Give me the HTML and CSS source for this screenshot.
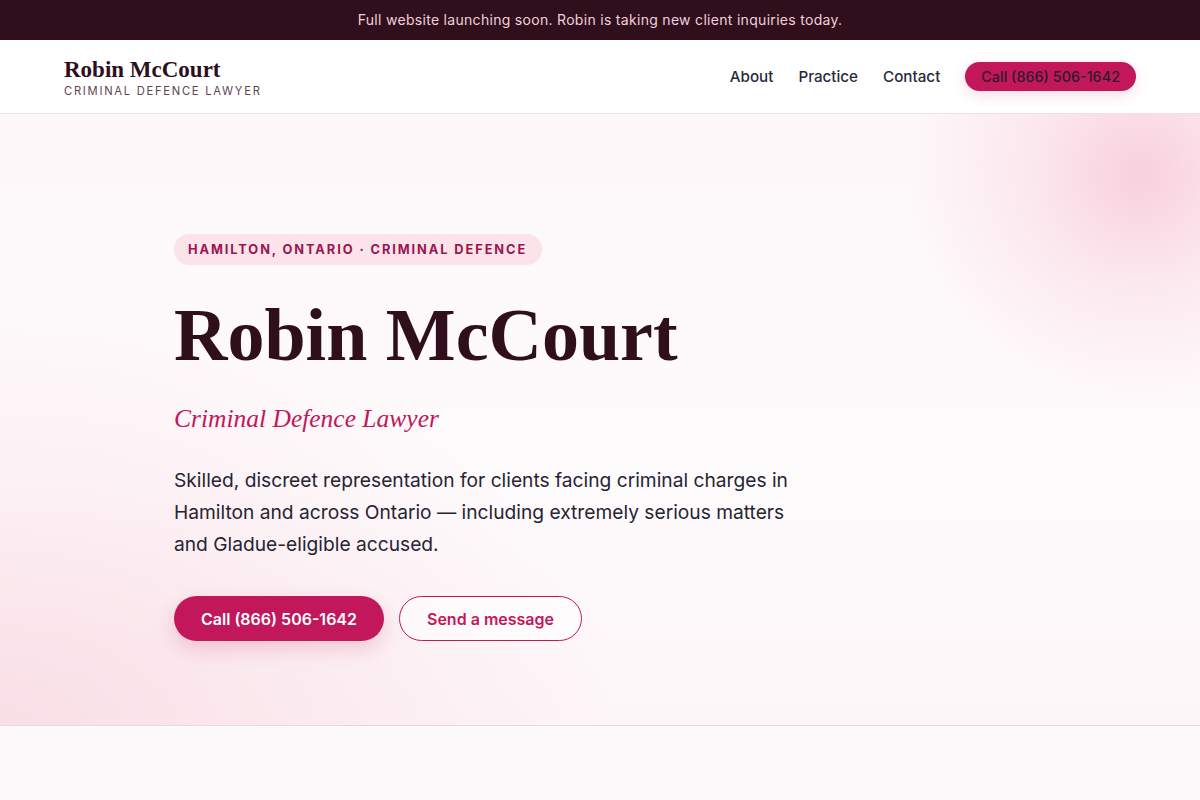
FILE: index.html
```html
<!DOCTYPE html>
<html lang="en">
<head>
    <meta charset="UTF-8">
    <meta name="viewport" content="width=device-width, initial-scale=1.0">
    <title>Robin McCourt - Criminal Defence Lawyer</title>
    <link rel="stylesheet" href="styles.css">
</head>
<body>
    <div class="announce">Full website launching soon. Robin is taking new client inquiries today.</div>

    <header class="site-header">
        <a class="brand" href="#">
            <span class="brand-name">Robin McCourt</span>
            <span class="brand-tag">Criminal Defence Lawyer</span>
        </a>
        <nav class="nav">
            <a href="#about">About</a>
            <a href="#practice">Practice</a>
            <a href="#contact">Contact</a>
            <a class="nav-call" href="tel:18665061642">Call (866) 506-1642</a>
        </nav>
    </header>

    <section class="hero">
        <div class="hero-inner">
            <span class="eyebrow">Hamilton, Ontario · Criminal Defence</span>
            <h1>Robin McCourt</h1>
            <p class="hero-sub">Criminal Defence Lawyer</p>
            <p class="hero-lead">Skilled, discreet representation for clients facing criminal charges in Hamilton and across Ontario — including extremely serious matters and Gladue-eligible accused.</p>
            <div class="hero-actions">
                <a class="btn btn-primary" href="tel:18665061642">Call (866) 506-1642</a>
                <a class="btn btn-outline" href="#contact">Send a message</a>
            </div>
        </div>
    </section>

    <section class="below"></section>
</body>
</html>
```

FILE: styles.css
```css
body {
    margin: 0;
    font-family: Inter, "Noto Sans", Arial, sans-serif;
    color: #262433;
    background: #fdfafb;
}
a {
    text-decoration: none;
    color: inherit;
}

.announce {
    height: 40px;
    line-height: 40px;
    background: #2e0f1b;
    color: #f2cfdb;
    font-size: 14px;
    letter-spacing: 0.3px;
    text-align: center;
}

.site-header {
    display: flex;
    justify-content: space-between;
    align-items: center;
    height: 73px;
    padding: 0 64px;
    background: #fff;
    border-bottom: 1px solid #f1dfe5;
}
.brand {
    display: flex;
    flex-direction: column;
    padding-top: 2px;
}
.brand-name {
    font-family: "Liberation Serif", "Times New Roman", serif;
    font-weight: 700;
    font-size: 23px;
    line-height: 26px;
    color: #2e0f1b;
}
.brand-tag {
    margin-top: 1px;
    font-size: 11.2px;
    letter-spacing: 0.155em;
    text-transform: uppercase;
    color: #5c4653;
}
.nav {
    display: flex;
    align-items: center;
    gap: 25px;
}
.nav a {
    font-size: 15.2px;
    font-weight: 500;
    color: #272a3a;
}
.nav .nav-call {
    padding: 6px 16px;
    border-radius: 16px;
    background: #c2185b;
    color: #2e1a2c;
    font-size: 14.4px;
    box-shadow: 0 4px 14px rgba(194, 24, 91, 0.15);
}

/* soft pink glow top right, wash bottom left */
.hero {
    padding: 120px 0 84px;
    border-bottom: 1px solid #eed6de;
    background:
        radial-gradient(circle at 1140px 61px, rgba(244, 168, 194, 0.5) 0, rgba(244, 168, 194, 0.2) 110px, rgba(244, 168, 194, 0) 230px),
        radial-gradient(ellipse 620px 420px at 0 100%, rgba(240, 170, 190, 0.32) 0, rgba(240, 170, 190, 0.12) 60%, rgba(240, 170, 190, 0) 100%),
        linear-gradient(180deg, #fdf7f9 0%, #fefbfc 60%, #fdf6f8 100%);
}
.hero-inner {
    max-width: 852px;
    margin: 0 auto;
}
.eyebrow {
    display: inline-block;
    padding: 8px 15px 8px 14px;
    border-radius: 16px;
    background: #fbe3ea;
    color: #9b1550;
    font-size: 12.8px;
    font-weight: 700;
    letter-spacing: 0.15em;
    text-transform: uppercase;
}
h1 {
    margin: 28px 0 0;
    font-family: "Liberation Serif", "Times New Roman", serif;
    font-weight: 700;
    font-size: 74px;
    line-height: 84px;
    color: #2e0f1b;
}
.hero-sub {
    margin: 27px 0 0;
    font-family: "Liberation Serif", "Times New Roman", serif;
    font-style: italic;
    font-size: 25.5px;
    line-height: 30px;
    color: #c2185b;
}
.hero-lead {
    max-width: 640px;
    margin: 30px 0 0;
    font-size: 19.2px;
    line-height: 32px;
    color: #262433;
}
.hero-actions {
    display: flex;
    gap: 15px;
    margin-top: 36px;
}
.btn {
    display: inline-flex;
    align-items: center;
    height: 45px;
    padding: 0 27px;
    border-radius: 23px;
    font-size: 16px;
    font-weight: 600;
    box-sizing: border-box;
}
.btn-primary {
    background: #c2185b;
    color: #fff;
    box-shadow: 0 8px 20px rgba(194, 24, 91, 0.18);
}
.btn-outline {
    border: 1px solid #c2185b;
    color: #c2185b;
    background: rgba(255, 255, 255, 0.6);
}

.below {
    height: 80px;
    background: #fdfafb;
}
```
